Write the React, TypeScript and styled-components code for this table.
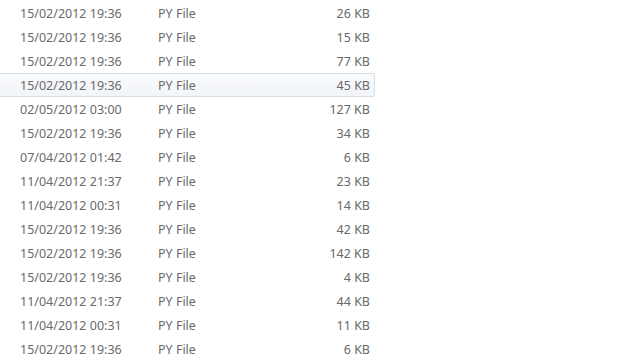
import styled, { createGlobalStyle } from "styled-components";

const GlobalStyle = createGlobalStyle`
  html, body {
    margin: 0;
    padding: 0;
    background: #ffffff;
    overflow: hidden;
  }
  body {
    font-family: "Noto Sans", "Open Sans", sans-serif;
  }
`;

const List = styled.div`
  width: 640px;
  height: 360px;
  padding-top: 1px;
  box-sizing: border-box;
  overflow: hidden;
`;

const Row = styled.div<{ $hover?: boolean }>`
  display: grid;
  grid-template-columns: 138px 120px 1fr;
  align-items: center;
  box-sizing: border-box;
  width: 377px;
  height: 24px;
  margin-left: -2px;
  padding: 0 4px 0 21px;
  border: 1px solid ${(p) => (p.$hover ? "#d9dfe7" : "transparent")};
  border-radius: 2px;
  background: ${(p) =>
    p.$hover ? "linear-gradient(to bottom, #fafbfd, #f1f4f8)" : "transparent"};
  font-size: 12.5px;
  color: #6a6a6a;
`;

const Cell = styled.span<{ $right?: boolean }>`
  white-space: nowrap;
  text-align: ${(p) => (p.$right ? "right" : "left")};
`;

const files = [
  ["15/02/2012 19:36", "26 KB"],
  ["15/02/2012 19:36", "15 KB"],
  ["15/02/2012 19:36", "77 KB"],
  ["15/02/2012 19:36", "45 KB"],
  ["02/05/2012 03:00", "127 KB"],
  ["15/02/2012 19:36", "34 KB"],
  ["07/04/2012 01:42", "6 KB"],
  ["11/04/2012 21:37", "23 KB"],
  ["11/04/2012 00:31", "14 KB"],
  ["15/02/2012 19:36", "42 KB"],
  ["15/02/2012 19:36", "142 KB"],
  ["15/02/2012 19:36", "4 KB"],
  ["11/04/2012 21:37", "44 KB"],
  ["11/04/2012 00:31", "11 KB"],
  ["15/02/2012 19:36", "6 KB"],
];

export default function App() {
  return (
    <>
      <GlobalStyle />
      <List>
        {files.map(([date, size], i) => (
          <Row key={i} $hover={i === 3}>
            <Cell>{date}</Cell>
            <Cell>PY File</Cell>
            <Cell $right>{size}</Cell>
          </Row>
        ))}
      </List>
    </>
  );
}
